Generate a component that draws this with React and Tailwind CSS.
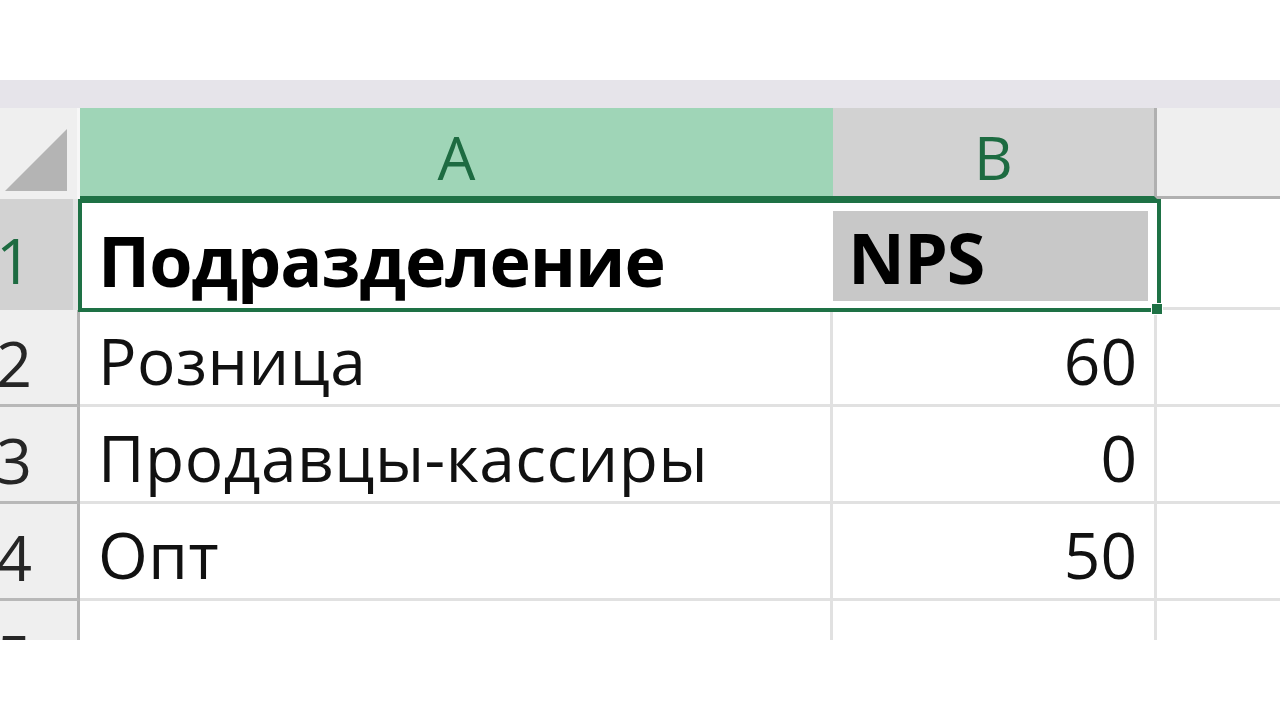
import React from "react"

const font = { fontFamily: '"Open Sans", "Noto Sans", sans-serif' }

const rows = [
  { n: "2", name: "Розница", nps: "60" },
  { n: "3", name: "Продавцы-кассиры", nps: "0" },
  { n: "4", name: "Опт", nps: "50" },
]

function RowHead({ n, green, className = "" }) {
  return (
    <div
      className={`w-[80px] shrink-0 overflow-hidden flex items-center border-r-[3px] border-[#b3b3b3] ${className}`}
    >
      <span className={`-ml-[4px] text-[63px] leading-none ${green ? "text-[#1d6b41]" : "text-[#262626]"}`}>{n}</span>
    </div>
  )
}

export default function App() {
  return (
    <div className="w-[1280px] h-[720px] bg-white overflow-hidden" style={font}>
      <div className="h-[80px]" />
      <div className="h-[560px] flex flex-col overflow-hidden">
        <div className="h-[28px] shrink-0 bg-[#e6e4ea]" />

        {/* column headers */}
        <div className="h-[91px] shrink-0 flex">
          <div className="w-[80px] shrink-0 bg-[#efefef] border-r-[3px] border-[#f7f7f7] flex items-end justify-end pb-[8px] pr-[10px]">
            <svg width="62" height="62" viewBox="0 0 62 62">
              <polygon points="0,62 62,62 62,0" fill="#b4b4b4" />
            </svg>
          </div>
          <div className="w-[753px] shrink-0 bg-[#9fd5b7] flex items-center justify-center pt-[10px] border-b-[3px] border-[#1e7145]">
            <span className="text-[60px] leading-none text-[#1d6b41]">A</span>
          </div>
          <div className="w-[324px] shrink-0 bg-[#d2d2d2] flex items-center justify-center pt-[10px] border-r-[3px] border-[#b0b0b0] border-b-[3px] border-b-[#1e7145]">
            <span className="text-[60px] leading-none text-[#1d6b41]">B</span>
          </div>
          <div className="flex-1 bg-[#efefef] border-b-[3px] border-[#b0b0b0]" />
        </div>

        {/* row 1 */}
        <div className="relative h-[111px] shrink-0 flex">
          <div className="w-[80px] shrink-0 overflow-hidden bg-[#d2d2d2] flex items-center pt-[10px] border-r-[7px] border-[#e4e4e4]">
            <span className="-ml-[4px] text-[63px] leading-none text-[#1d6b41]">1</span>
          </div>
          <div className="w-[753px] shrink-0 flex items-center pl-[18px] pt-[10px]">
            <span className="text-[70px] leading-none font-bold text-black tracking-[-1px]">Подразделение</span>
          </div>
          <div className="w-[324px] shrink-0 pt-[12px] pb-[9px] pr-[9px]">
            <div className="h-full bg-[#c8c8c8] flex items-center pl-[15px] pt-[2px]">
              <span className="text-[70px] leading-none font-bold text-black tracking-[-1px]">NPS</span>
            </div>
          </div>
          <div className="flex-1 border-b-[3px] border-[#e1e1e1]" />
          <div className="absolute left-[78px] top-0 w-[1083px] h-[113px] border-4 border-[#1e7145]" />
          <div className="absolute left-[1151px] top-[104px] w-[12px] h-[12px] bg-[#1e7145] border border-white" />
        </div>

        {rows.map((r) => (
          <div key={r.n} className="h-[97px] shrink-0 flex">
            <RowHead n={r.n} className="bg-[#efefef] border-b-[3px] border-b-[#b8b8b8] pt-[10px]" />
            <div className="w-[753px] shrink-0 flex items-center pl-[18px] pt-[8px] border-b-[3px] border-r-[3px] border-[#e1e1e1]">
              <span className="text-[64px] leading-none text-[#111] tracking-[0.5px]">{r.name}</span>
            </div>
            <div className="w-[324px] shrink-0 flex items-center justify-end pr-[17px] pt-[8px] border-b-[3px] border-r-[3px] border-[#e1e1e1]">
              <span className="text-[64px] leading-none text-[#111]">{r.nps}</span>
            </div>
            <div className="flex-1 border-b-[3px] border-[#e1e1e1]" />
          </div>
        ))}

        {/* row 5, cut */}
        <div className="h-[97px] shrink-0 flex">
          <div className="w-[80px] shrink-0 overflow-hidden bg-[#efefef] border-r-[3px] border-[#b3b3b3] pt-[24px]">
            <span className="-ml-[4px] text-[63px] leading-none text-[#262626]">5</span>
          </div>
          <div className="w-[753px] shrink-0 border-r-[3px] border-[#e1e1e1]" />
          <div className="w-[324px] shrink-0 border-r-[3px] border-[#e1e1e1]" />
          <div className="flex-1" />
        </div>
      </div>
    </div>
  )
}
